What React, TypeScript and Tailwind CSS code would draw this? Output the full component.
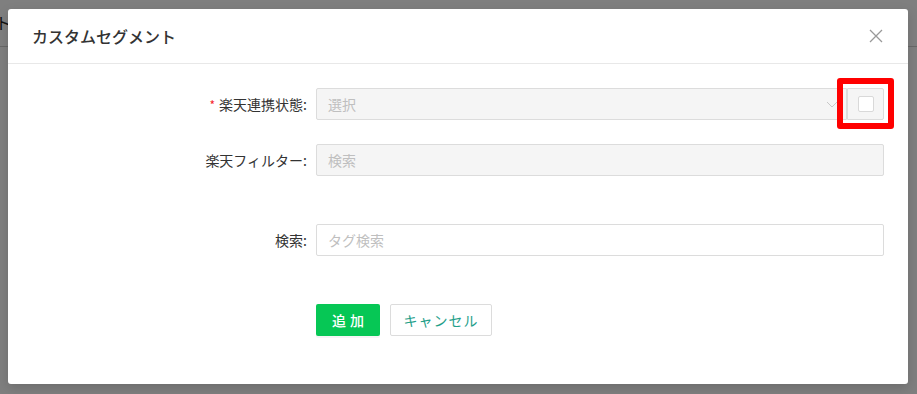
import { useState } from "react";

const font = { fontFamily: '"Noto Sans CJK JP", "Noto Sans", sans-serif' };

const App = () => {
  const [checked, setChecked] = useState(false);

  return (
    <div className="relative w-[917px] h-[394px] overflow-hidden bg-white" style={font}>
      {/* page behind the modal */}
      <div className="h-[47px] border-b border-[#d0d0d0] flex items-center">
        <span className="text-[16px] text-[#222] -ml-[5px] -mt-[2px]">ト</span>
      </div>

      {/* mask */}
      <div className="absolute inset-0 bg-black/50" />

      {/* modal */}
      <div className="absolute left-[8px] top-[9px] w-[900px] h-[375px] bg-white rounded-[3px] shadow-[0_4px_12px_rgba(0,0,0,0.15)] flex flex-col">
        <div className="h-[55px] flex items-center justify-between px-[24px] border-b border-[#e8e8e8]">
          <h2 className="text-[16px] text-[#333] font-medium">カスタムセグメント</h2>
          <button className="w-[16px] h-[16px] flex items-center justify-center text-[#999]">
            <svg width="14" height="14" viewBox="0 0 14 14" fill="none" stroke="currentColor" strokeWidth="1.3">
              <path d="M1 1L13 13M13 1L1 13" />
            </svg>
          </button>
        </div>

        <div className="px-[24px] pt-[24px] text-[14px] text-[#333]">
          {/* row 1 */}
          <div className="flex items-center h-[32px] mb-[24px]">
            <label className="w-[284px] pr-[9px] text-right">
              <span className="text-[#f5222d] mr-[4px] text-[12px]">*</span>楽天連携状態:
            </label>
            <div className="flex flex-1 h-[32px] relative">
              <div className="flex-1 flex items-center justify-between bg-[#f5f5f5] border border-[#dcdcdc] rounded-l-[2px] pl-[11px] pr-[8px]">
                <span className="text-[#bfbfbf]">選択</span>
                <svg width="12" height="12" viewBox="0 0 12 12" fill="none" stroke="#c8c8c8" strokeWidth="1">
                  <path d="M1 4l5 5 5-5" />
                </svg>
              </div>
              <button
                onClick={() => setChecked(!checked)}
                className="w-[37px] flex items-center justify-center bg-[#f5f5f5] border border-[#dcdcdc] rounded-r-[2px]"
              >
                <span className="w-[16px] h-[16px] bg-white border border-[#d9d9d9] rounded-[2px]" />
              </button>
              <div className="absolute left-[521px] top-[-10px] w-[57px] h-[51px] border-[6px] border-[#ff0000] rounded-[3px]" />
            </div>
          </div>

          {/* row 2 */}
          <div className="flex items-center h-[32px] mb-[24px]">
            <label className="w-[284px] pr-[9px] text-right">楽天フィルター:</label>
            <div className="flex-1 h-[32px] flex items-center bg-[#f5f5f5] border border-[#dcdcdc] rounded-[2px] pl-[11px]">
              <span className="text-[#bfbfbf]">検索</span>
            </div>
          </div>

          <div className="h-[24px]" />

          {/* row 3 */}
          <div className="flex items-center h-[32px] mb-[48px]">
            <label className="w-[284px] pr-[9px] text-right">検索:</label>
            <input
              placeholder="タグ検索"
              className="flex-1 h-[32px] bg-white border border-[#dcdcdc] rounded-[2px] px-[11px] outline-none placeholder:text-[#bfbfbf]"
            />
          </div>

          <div className="flex items-center pl-[284px] gap-[10px]">
            <button className="w-[64px] h-[32px] bg-[#06c755] text-white rounded-[2px] font-medium tracking-[4px] pl-[4px] shadow-[0_2px_0_rgba(0,0,0,0.04)]">
              追加
            </button>
            <button className="w-[102px] h-[32px] bg-white border border-[#dcdcdc] rounded-[2px] text-[#1fa08a] tracking-[1px]">
              キャンセル
            </button>
          </div>
        </div>
      </div>
    </div>
  );
};

export default App;
